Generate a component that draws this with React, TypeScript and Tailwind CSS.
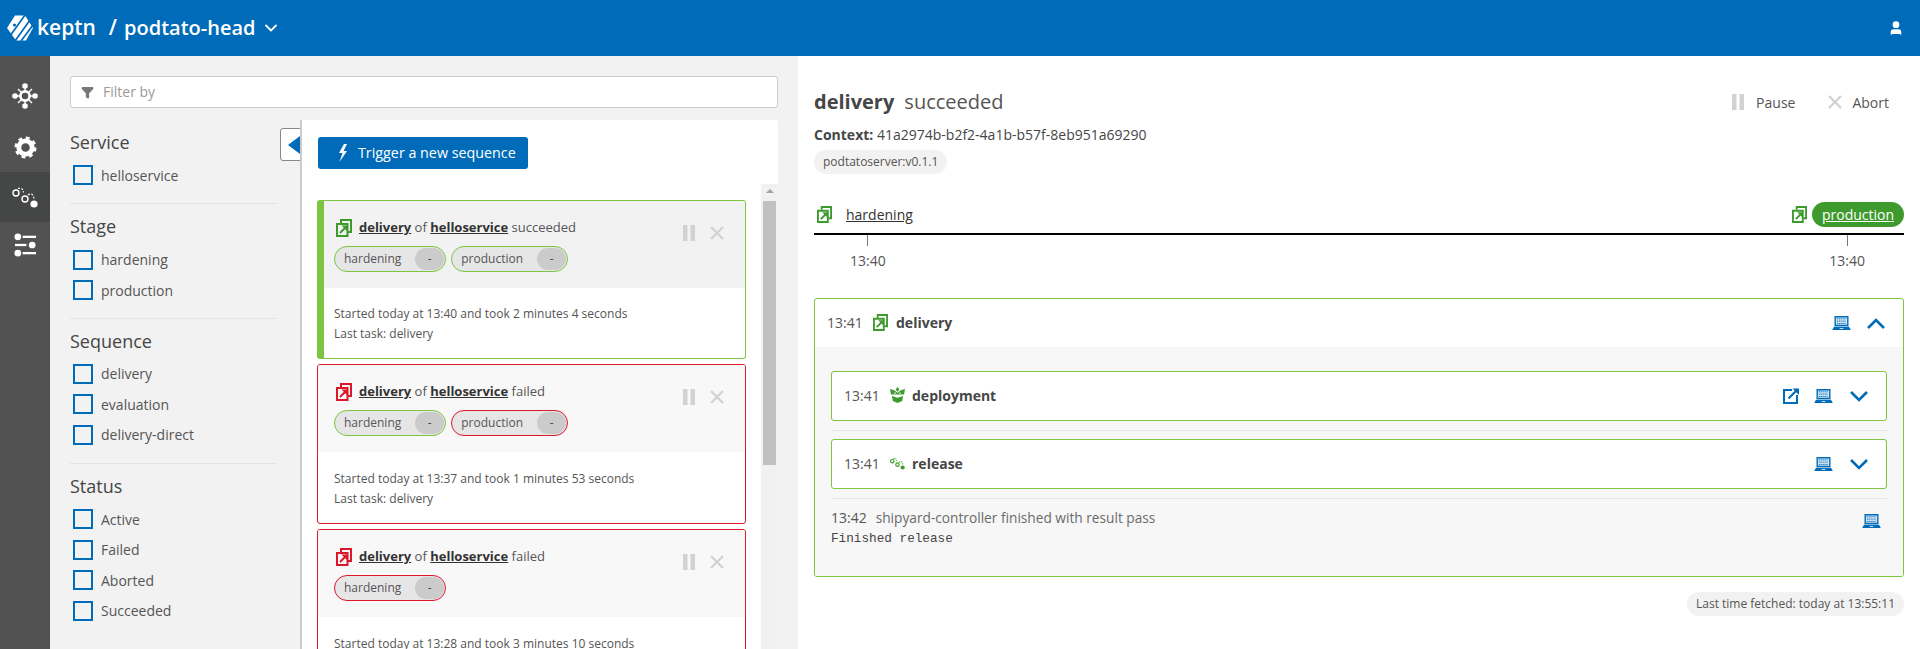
import React from 'react';
import { ChevronDown, Filter, User } from 'lucide-react';

const GREEN = '#7dc540';
const DARK_GREEN = '#3f9a2e';
const RED = '#dc172a';
const BLUE = '#006bb8';

function SequenceIcon({ color, className }: { color: string; className?: string }) {
  return (
    <svg viewBox="0 0 16 18" className={className} fill="none">
      <path d="M5 4V1h10v12h-3" stroke={color} strokeWidth="2" />
      <path d="M1 5h10.500v12H1z" stroke={color} strokeWidth="2" />
      <path d="M4 14l5-5" stroke={color} strokeWidth="2" />
      <path d="M5.500 6.500H11V12z" fill={color} />
    </svg>
  );
}

function LaptopIcon({ className }: { className?: string }) {
  return (
    <svg viewBox="0 0 20 15" className={className}>
      <path d="M2.500 0h15v11h-15z" fill={BLUE} />
      <path d="M4 1.500h12v8H4z" fill="#cfe3f3" />
      <path d="M5 3h10M5 5.500h10M5 8h10" stroke={BLUE} strokeWidth="0.9" strokeDasharray="1.4 0.6" />
      <path d="M2 11.500h16l2 3.500H0z" fill={BLUE} />
      <path d="M8 13h4v1H8z" fill="#ffffff" />
    </svg>
  );
}

function ExternalIcon({ className }: { className?: string }) {
  return (
    <svg viewBox="0 0 16 16" className={className} fill="none">
      <path d="M9 2H1v13h13V7" stroke={BLUE} strokeWidth="2" />
      <path d="M5.500 10.500L13 3" stroke={BLUE} strokeWidth="2.2" />
      <path d="M9.500 0.500H16V7z" fill={BLUE} />
    </svg>
  );
}

function Chevron({ up }: { up?: boolean }) {
  return (
    <svg viewBox="0 0 18 11" className="w-[18px] h-[11px]" fill="none">
      <path d={up ? 'M1 10l8-8 8 8' : 'M1 1l8 8 8-8'} stroke={BLUE} strokeWidth="2.6" />
    </svg>
  );
}

function PauseIcon({ className }: { className?: string }) {
  return (
    <svg viewBox="0 0 12 16" className={className}>
      <path d="M0 0h4.500v16H0zM7.500 0H12v16H7.500z" fill="#d2d2d2" />
    </svg>
  );
}

function CloseIcon({ className }: { className?: string }) {
  return (
    <svg viewBox="0 0 14 14" className={className}>
      <path d="M1 1l12 12M13 1L1 13" stroke="#d2d2d2" strokeWidth="2.4" />
    </svg>
  );
}

function KeptnLogo() {
  return (
    <svg viewBox="0 0 26 26" className="w-[26px] h-[26px]">
      <path d="M8 0.500h10l8 12.500-7 12.500H9L0 13z" fill="#ffffff" />
      <path d="M3 21L18 0M8 26L23 5M14 26L26 10" stroke={BLUE} strokeWidth="1.7" />
      <circle cx="7.500" cy="10" r="1.6" fill={BLUE} />
    </svg>
  );
}

function HubIcon() {
  return (
    <svg viewBox="0 0 26 26" className="w-[26px] h-[26px]" fill="none">
      <path d="M13 3v20M3 13h20M6 6l14 14M20 6L6 20" stroke="#fff" strokeWidth="1.4" />
      <circle cx="13" cy="13" r="4.600" fill="#525252" stroke="#fff" strokeWidth="2.6" />
      <g fill="#fff">
        <circle cx="13" cy="3" r="2.800" />
        <circle cx="13" cy="23" r="2.800" />
        <circle cx="3" cy="13" r="2.800" />
        <circle cx="23" cy="13" r="2.800" />
      </g>
    </svg>
  );
}

function GearIcon() {
  return (
    <svg viewBox="0 0 24 24" className="w-[23px] h-[23px]" fill="none">
      <circle cx="12" cy="12" r="7" stroke="#fff" strokeWidth="5" />
      <circle cx="12" cy="12" r="10" stroke="#fff" strokeWidth="3" strokeDasharray="4 3.850" />
    </svg>
  );
}

function NodesIcon({ color = '#fff', sw = 1.4, className }: { color?: string; sw?: number; className?: string }) {
  return (
    <svg viewBox="0 0 26 22" className={className} fill="none">
      <circle cx="4" cy="7" r="3" stroke={color} strokeWidth={sw} />
      <circle cx="13" cy="13" r="3" stroke={color} strokeWidth={sw} />
      <circle cx="22" cy="18" r="3.600" fill={color} />
      <path d="M6 2.500c3-1 5 0 5.500 4M16 9c3-2 6-1 6 5" stroke={color} strokeWidth={sw - 0.2} strokeDasharray="2 1.500" />
    </svg>
  );
}

function SettingsIcon() {
  return (
    <svg viewBox="0 0 24 24" className="w-[23px] h-[24px]">
      <g fill="#fff">
        <circle cx="4" cy="3.500" r="3.500" />
        <rect x="9" y="2.300" width="14" height="2.400" />
        <rect x="1" y="10.800" width="12" height="2.400" />
        <circle cx="19" cy="12" r="3.500" />
        <circle cx="4" cy="20.500" r="3.500" />
        <rect x="9" y="19.300" width="14" height="2.400" />
      </g>
    </svg>
  );
}

function DeployIcon({ className }: { className?: string }) {
  return (
    <svg viewBox="0 0 16 17" className={className}>
      <path d="M8 0l2 2.500-2 2.500-2-2.500zM0 2l4.500 1.500L8 6l3.500-2.500L16 2l-1 6H1z" fill={DARK_GREEN} />
      <path d="M2 9.500l6 2 6-2-1 5.500-5 2-5-2z" fill={DARK_GREEN} />
      <path d="M4.500 6.500h2M9.500 6.500h2" stroke="#cfe8c6" strokeWidth="1.200" />
    </svg>
  );
}

function FilterGroup({ title, items, box, titleBox }: { title: string; items: string[]; box: string; titleBox: string }) {
  return (
    <div className={box}>
      <div className={`text-[18px] leading-[24px] text-[#454646] ${titleBox}`}>{title}</div>
      {items.map((item) => (
        <label key={item} className="flex items-center h-[30.5px] pl-[3px]">
          <span className="w-[20px] h-[20px] border-2 border-[#006bb8] bg-[#f2f2f2] mr-[8px]" />
          <span className="text-[14px] text-[#555555]">{item}</span>
        </label>
      ))}
    </div>
  );
}

function StageChip({ name, color }: { name: string; color: string }) {
  return (
    <div
      className="flex items-center justify-between h-[26px] rounded-full border bg-[#e6e6e6] pl-[9px] pr-px"
      style={{ borderColor: color }}
    >
      <span className="text-[12px] text-[#555555] mr-[14px]">{name}</span>
      <span className="w-[29px] h-[22px] rounded-full bg-[#cbcbcb] text-[12px] text-[#454646] flex items-center justify-center">-</span>
    </div>
  );
}

type Seq = {
  color: string;
  status: string;
  selected?: boolean;
  stages: { name: string; color: string }[];
  started: string;
};

const sequences: Seq[] = [
  {
    color: GREEN,
    status: 'succeeded',
    selected: true,
    stages: [
      { name: 'hardening', color: GREEN },
      { name: 'production', color: GREEN },
    ],
    started: 'Started today at 13:40 and took 2 minutes 4 seconds',
  },
  {
    color: RED,
    status: 'failed',
    stages: [
      { name: 'hardening', color: GREEN },
      { name: 'production', color: RED },
    ],
    started: 'Started today at 13:37 and took 1 minutes 53 seconds',
  },
  {
    color: RED,
    status: 'failed',
    stages: [{ name: 'hardening', color: RED }],
    started: 'Started today at 13:28 and took 3 minutes 10 seconds',
  },
];

function SequenceCard({ seq }: { seq: Seq }) {
  return (
    <div
      className={`rounded-[3px] border bg-white shrink-0 overflow-hidden ${seq.selected ? 'border-l-[7px] h-[159px]' : 'h-[160px]'}`}
      style={{ borderColor: seq.color }}
    >
      <div className={`h-[87px] flex justify-between pr-[21px] ${seq.selected ? 'bg-[#f2f2f2] pl-[10px]' : 'bg-[#f8f8f8] pl-[16px]'}`}>
        <div className="pt-[17px]">
          <div className="flex items-center h-[19px] pl-[2px]">
            <SequenceIcon color={seq.selected ? DARK_GREEN : RED} className="w-[16px] h-[18px] mr-[7px]" />
            <span className="text-[13px] text-[#555555] whitespace-nowrap">
              <span className="font-bold underline text-[#333333]">delivery</span> of{' '}
              <span className="font-bold underline text-[#333333]">helloservice</span> {seq.status}
            </span>
          </div>
          <div className="flex gap-[5px] mt-[9px]">
            {seq.stages.map((s) => (
              <StageChip key={s.name} name={s.name} color={s.color} />
            ))}
          </div>
        </div>
        <div className="flex items-center gap-[15px] h-[42px] mt-[11px]">
          <PauseIcon className="w-[12px] h-[16px]" />
          <CloseIcon className="w-[14px] h-[14px]" />
        </div>
      </div>
      <div className={`text-[12px] leading-[19.5px] text-[#555555] ${seq.selected ? 'pt-[16px] pl-[10px]' : 'pt-[17px] pl-[16px]'}`}>
        <div>{seq.started}</div>
        <div>Last task: delivery</div>
      </div>
    </div>
  );
}

function TaskRow({ name, icon, external }: { name: string; icon: React.ReactNode; external?: boolean }) {
  return (
    <div className="h-[50px] bg-white rounded-[3px] border border-[#7dc540] flex items-center justify-between pl-[12px] pr-[18px]">
      <div className="flex items-center pb-[2px]">
        <span className="text-[14px] text-[#555555] w-[46px]">13:41</span>
        <span className="w-[15px] flex justify-center mr-[7px]">{icon}</span>
        <span className="text-[14px] font-bold text-[#454646]">{name}</span>
      </div>
      <div className="flex items-center">
        {external && <ExternalIcon className="w-[16px] h-[16px] mr-[15px]" />}
        <LaptopIcon className="w-[19px] h-[14px] mr-[17px]" />
        <Chevron />
      </div>
    </div>
  );
}

export default function App() {
  return (
    <div className="h-screen overflow-hidden flex flex-col bg-[#f2f2f2] font-['Open_Sans',sans-serif] text-[#454646]">
      {/* Header */}
      <header className="h-[56px] shrink-0 bg-[#006bb8] flex items-center justify-between text-white pl-[7px] pr-[16px]">
        <div className="flex items-center">
          <KeptnLogo />
          <span className="text-[21px] font-semibold ml-[4px]">keptn</span>
          <span className="text-[21px] font-semibold ml-[13px]">/</span>
          <span className="text-[20px] font-semibold ml-[7px]">podtato-head</span>
          <ChevronDown className="w-[20px] h-[20px] ml-[5px]" strokeWidth={2.2} />
        </div>
        <User className="w-[16px] h-[16px]" fill="#ffffff" />
      </header>

      <div className="flex flex-1 min-h-0">
        {/* Side nav */}
        <nav className="w-[50px] shrink-0 bg-[#525252] pt-[16px]">
          <div className="h-[50px] pb-[2px] flex items-center justify-center"><HubIcon /></div>
          <div className="h-[50px] flex items-center justify-center"><GearIcon /></div>
          <div className="h-[50px] flex items-center justify-center bg-[#454646]">
            <NodesIcon className="w-[26px] h-[22px]" />
          </div>
          <div className="h-[50px] pb-[4px] flex items-center justify-center"><SettingsIcon /></div>
        </nav>

        {/* Sequence area */}
        <div className="w-[748px] shrink-0 pl-[20px] pr-[20px] pt-[20px] flex flex-col min-h-0">
          <div className="h-[32px] w-[708px] shrink-0 bg-white rounded-[3px] border border-[#cccccc] flex items-center pl-[10px]">
            <Filter className="w-[13px] h-[13px] text-[#777777]" fill="#777777" />
            <span className="text-[14px] text-[#9a9a9a] ml-[9px] -mt-px">Filter by</span>
          </div>
          <div className="flex flex-1 min-h-0">
            <div className="w-[207px] shrink-0 pt-[11px]">
              <FilterGroup title="Service" items={['helloservice']} box="pt-[11px] pb-[12px] border-b border-[#e4e4e4]" titleBox="mb-[6px]" />
              <FilterGroup title="Stage" items={['hardening', 'production']} box="pt-[10px] pb-[12px] border-b border-[#e4e4e4]" titleBox="mb-[7px]" />
              <FilterGroup title="Sequence" items={['delivery', 'evaluation', 'delivery-direct']} box="pt-[10px] pb-[13px] border-b border-[#e4e4e4]" titleBox="mb-[6px]" />
              <FilterGroup title="Status" items={['Active', 'Failed', 'Aborted', 'Succeeded']} box="pt-[10px]" titleBox="mb-[6px]" />
            </div>
            <div className="w-[3px] shrink-0" />
            <div className="relative w-[20px] shrink-0">
              <div className="absolute left-0 top-[20px] w-[21px] h-[33px] rounded-l-[3px] border border-[#888888] bg-white flex items-center justify-end overflow-hidden">
                <span className="w-0 h-0 border-y-[9px] border-y-transparent border-r-[12px] border-r-[#006bb8]" />
              </div>
            </div>
            <div className="relative flex-1 min-w-0 mt-[12px] bg-white border-l-2 border-[#cccccc] rounded-tr-[3px] flex flex-col min-h-0">
              <div className="pl-[16px] pt-[17px] shrink-0">
                <button className="w-[210px] h-[32px] pl-[20px] rounded-[3px] bg-[#006bb8] text-white text-[14.3px] flex items-center">
                  <svg viewBox="0 0 10 18" className="w-[10px] h-[18px] mr-[10px]">
                    <path d="M6 0L1 9h3.500L1.500 18 9 7H5.500L9 0z" fill="#ffffff" />
                  </svg>
                  Trigger a new sequence
                </button>
              </div>
              <div className="flex flex-1 min-h-0 mt-[15px]">
                <div className="flex-1 min-w-0 pl-[15px] pr-[15px] pt-[16px] flex flex-col gap-[5px] overflow-hidden">
                  {sequences.map((seq, i) => (
                    <SequenceCard key={i} seq={seq} />
                  ))}
                </div>
                <div className="w-[17px] shrink-0 bg-[#f1f1f1] flex flex-col items-center">
                  <span className="mt-[5px] w-0 h-0 border-x-[4px] border-x-transparent border-b-[4px] border-b-[#a3a3a3]" />
                  <span className="mt-[8px] w-[13px] h-[264px] bg-[#c1c1c1]" />
                </div>
              </div>
            </div>
          </div>
        </div>

        {/* Details */}
        <main className="flex-1 min-w-0 bg-white pl-[16px] pr-[16px]">
          <div className="flex items-center justify-between h-[28px] mt-[32px]">
            <div className="text-[20px]">
              <span className="font-bold mr-[10px]">delivery</span>
              <span className="text-[#555555]">succeeded</span>
            </div>
            <div className="flex items-center text-[14px] text-[#555555] pr-[15px]">
              <PauseIcon className="w-[12px] h-[16px] mr-[12px]" />
              <span className="mr-[33px]">Pause</span>
              <CloseIcon className="w-[14px] h-[14px] mr-[10px]" />
              <span>Abort</span>
            </div>
          </div>
          <div className="text-[14px] mt-[9px] leading-[19px]">
            <span className="font-bold">Context:</span> 41a2974b-b2f2-4a1b-b57f-8eb951a69290
          </div>
          <div className="inline-flex items-center h-[24px] px-[9px] mt-[6px] rounded-full bg-[#f2f2f2] text-[12px] text-[#555555]">
            podtatoserver:v0.1.1
          </div>

          {/* Timeline */}
          <div className="flex items-center justify-between mt-[29px] h-[32px] border-b-2 border-black pb-[7px]">
            <div className="flex items-center pl-[3px]">
              <SequenceIcon color={DARK_GREEN} className="w-[15px] h-[17px] mr-[14px]" />
              <span className="text-[14px] underline text-[#333333]">hardening</span>
            </div>
            <div className="flex items-center">
              <SequenceIcon color={DARK_GREEN} className="w-[15px] h-[17px] mr-[5px]" />
              <span className="h-[25px] w-[92px] rounded-full bg-[#3f9a2e] text-white text-[14px] underline flex items-center justify-center">production</span>
            </div>
          </div>
          <div className="flex justify-between h-[36px] text-[14px] text-[#555555]">
            <div className="ml-[36px] flex flex-col items-center">
              <span className="w-px h-[12px] bg-[#777777]" />
              <span className="mt-[4px]">13:40</span>
            </div>
            <div className="mr-[39px] flex flex-col items-center">
              <span className="w-px h-[12px] bg-[#777777]" />
              <span className="mt-[4px]">13:40</span>
            </div>
          </div>

          {/* Task */}
          <div className="mt-[27px] rounded-[3px] border border-[#7dc540] overflow-hidden">
            <div className="h-[48px] flex items-center justify-between pl-[12px] pr-[18px]">
              <div className="flex items-center pb-[2px]">
                <span className="text-[14px] text-[#555555] w-[46px]">13:41</span>
                <SequenceIcon color={DARK_GREEN} className="w-[15px] h-[17px] mr-[8px]" />
                <span className="text-[14px] font-bold">delivery</span>
              </div>
              <div className="flex items-center">
                <LaptopIcon className="w-[19px] h-[14px] mr-[16px]" />
                <Chevron up />
              </div>
            </div>
            <div className="bg-[#f7f7f7] pt-[24px] pl-[16px] pr-[16px] h-[229px]">
              <TaskRow name="deployment" external icon={<DeployIcon className="w-[15px] h-[16px]" />} />
              <div className="h-px bg-[#e4e4e4] mt-[9px] mb-[8px]" />
              <TaskRow name="release" icon={<NodesIcon color={DARK_GREEN} sw={2} className="w-[18px] h-[15px]" />} />
              <div className="h-px bg-[#e4e4e4] mt-[9px]" />
              <div className="flex justify-between pt-[8px]">
                <div>
                  <div className="text-[14px] leading-[21px] text-[#555555]">
                    <span className="mr-[9px]">13:42</span>
                    <span className="text-[13.7px] text-[#6b6b6b]">shipyard-controller finished with result pass</span>
                  </div>
                  <div className="font-['Liberation_Mono',monospace] text-[12.7px] leading-[21px] text-[#454646]">Finished release</div>
                </div>
                <LaptopIcon className="w-[19px] h-[14px] mr-[6px] mt-[7px]" />
              </div>
            </div>
          </div>

          <div className="flex justify-end mt-[15px]">
            <div className="h-[24px] px-[9px] rounded-full bg-[#f2f2f2] text-[12px] text-[#555555] flex items-center">
              Last time fetched: today at 13:55:11
            </div>
          </div>
        </main>
      </div>
    </div>
  );
}
